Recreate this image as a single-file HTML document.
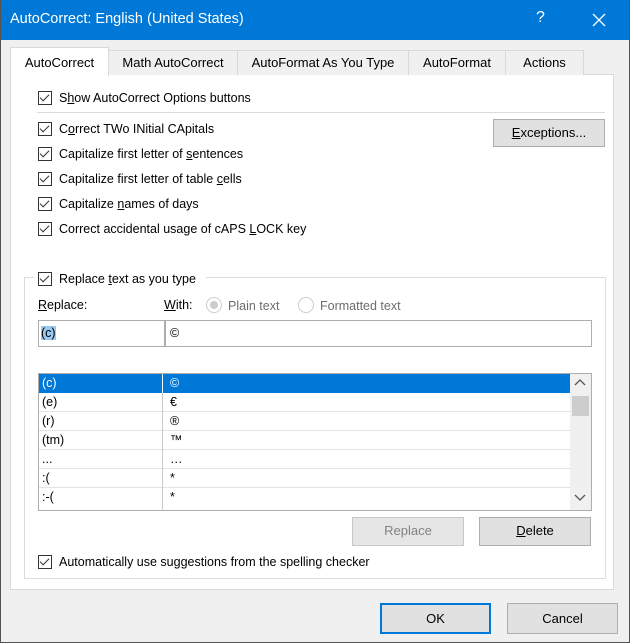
<!DOCTYPE html>
<html><head><meta charset="utf-8"><style>
*{box-sizing:border-box;margin:0;padding:0}
body{width:630px;height:643px;background:#f0f0f0;font-family:"Liberation Sans",sans-serif;font-size:12.5px;color:#000;position:relative;overflow:hidden}
.a{position:absolute;white-space:nowrap}
.title{left:0;top:0;width:630px;height:40px;background:#0078d7;color:#fff}
.tab{top:50px;height:25px;border:1px solid #d9d9d9;border-bottom:none;background:#f0f0f0;text-align:center;line-height:24px;font-size:13px}
.cb{width:14px;height:14px;border:1px solid #333;background:#fff}
.cb:after{content:"";position:absolute;left:3px;top:0px;width:4px;height:8px;border:solid #333;border-width:0 1.5px 1.5px 0;transform:rotate(45deg)}
.btn{border:1px solid #adadad;background:#e1e1e1;text-align:center;line-height:26px;font-size:13px}
.row{left:39px;width:531px;height:19px;border-bottom:1px solid #e3e3e3;line-height:18px}
.row span{position:absolute;left:3px}
.row b{font-weight:normal;position:absolute;left:131px}
.row i{position:absolute;left:123px;top:0;bottom:-1px;border-left:1px solid #c8c8c8}
u{text-decoration:underline}
</style></head><body>
<div class="a title"><span class="a" style="left:10px;top:11px;font-size:14.5px">AutoCorrect: English (United States)</span>
<span class="a" style="left:536px;top:9px;font-size:16px">?</span>
<svg class="a" style="left:592px;top:13px" width="14" height="14"><path d="M1 1L13 13M13 1L1 13" stroke="#fff" stroke-width="1.3"/></svg></div>
<div class="a" style="left:10px;top:74px;width:604px;height:516px;background:#fff;border:1px solid #d9d9d9"></div>
<div class="a tab" style="left:108px;width:130px">Math AutoCorrect</div>
<div class="a tab" style="left:237px;width:172px">AutoFormat As You Type</div>
<div class="a tab" style="left:408px;width:98px">AutoFormat</div>
<div class="a tab" style="left:505px;width:79px">Actions</div>
<div class="a tab" style="left:10px;top:47px;height:29px;width:99px;background:#fff;line-height:30px">AutoCorrect</div>

<div class="a cb" style="left:38px;top:91px"></div><div class="a" style="left:59px;top:91px">S<u>h</u>ow AutoCorrect Options buttons</div>
<div class="a" style="left:37px;top:112px;width:568px;height:1px;background:#dcdcdc"></div>
<div class="a cb" style="left:38px;top:122px"></div><div class="a" style="left:59px;top:122px">C<u>o</u>rrect TWo INitial CApitals</div>
<div class="a cb" style="left:38px;top:147px"></div><div class="a" style="left:59px;top:147px">Capitalize first letter of <u>s</u>entences</div>
<div class="a cb" style="left:38px;top:172px"></div><div class="a" style="left:59px;top:172px">Capitalize first letter of table <u>c</u>ells</div>
<div class="a cb" style="left:38px;top:197px"></div><div class="a" style="left:59px;top:197px">Capitalize <u>n</u>ames of days</div>
<div class="a cb" style="left:38px;top:222px"></div><div class="a" style="left:59px;top:222px">Correct accidental usage of cAPS <u>L</u>OCK key</div>
<div class="a btn" style="left:493px;top:119px;width:112px;height:28px"><u>E</u>xceptions...</div>

<div class="a" style="left:24px;top:277px;width:582px;height:302px;border:1px solid #dcdcdc"></div>
<div class="a" style="left:34px;top:271px;width:172px;height:14px;background:#fff"></div>
<div class="a cb" style="left:38px;top:272px"></div><div class="a" style="left:59px;top:272px">Replace <u>t</u>ext as you type</div>
<div class="a" style="left:38px;top:298px"><u>R</u>eplace:</div>
<div class="a" style="left:164px;top:298px"><u>W</u>ith:</div>
<div class="a" style="left:206px;top:297px;width:16px;height:16px;border-radius:50%;border:1px solid #ccc;background:#fff"><div class="a" style="left:3px;top:3px;width:8px;height:8px;border-radius:50%;background:#ccc"></div></div>
<div class="a" style="left:228px;top:299px;color:#6d6d6d">Plain text</div>
<div class="a" style="left:298px;top:297px;width:16px;height:16px;border-radius:50%;border:1px solid #ccc;background:#fff"></div>
<div class="a" style="left:320px;top:299px;color:#6d6d6d">Formatted text</div>
<div class="a" style="left:38px;top:320px;width:127px;height:27px;border:1px solid #adadad;background:#fff"><span class="a" style="left:2px;top:5px;background:#99c9ef">(c)</span></div>
<div class="a" style="left:164px;top:320px;width:428px;height:27px;border:1px solid #adadad;border-left:2px solid #adadad;background:#fff"><span class="a" style="left:4px;top:5px">©</span></div>

<div class="a" style="left:38px;top:373px;width:554px;height:138px;border:1px solid #adadad;background:#fff"></div>
<div class="a row" style="top:374px;background:#0078d7;color:#fff;border-bottom-color:#0078d7"><span>(c)</span><i style="border-color:#fff"></i><b>©</b></div>
<div class="a row" style="top:393px"><span>(e)</span><i></i><b>€</b></div>
<div class="a row" style="top:412px"><span>(r)</span><i></i><b>®</b></div>
<div class="a row" style="top:431px"><span>(tm)</span><i></i><b>™</b></div>
<div class="a row" style="top:450px"><span>...</span><i></i><b>…</b></div>
<div class="a row" style="top:469px"><span>:(</span><i></i><b>*</b></div>
<div class="a row" style="top:488px;height:22px;border:none"><span>:-(</span><i></i><b>*</b></div>
<div class="a" style="left:570px;top:374px;width:21px;height:136px;background:#f0f0f0"></div>
<div class="a" style="left:572px;top:396px;width:17px;height:20px;background:#cdcdcd"></div>
<svg class="a" style="left:574px;top:379px" width="12" height="8"><path d="M1 6L6 1L11 6" fill="none" stroke="#555" stroke-width="1.3"/></svg>
<svg class="a" style="left:574px;top:494px" width="12" height="8"><path d="M1 1L6 6L11 1" fill="none" stroke="#555" stroke-width="1.3"/></svg>

<div class="a btn" style="left:352px;top:517px;width:112px;height:29px;color:#838383;background:#e6e6e6;border-color:#c8c8c8">Replace</div>
<div class="a btn" style="left:479px;top:517px;width:112px;height:29px"><u>D</u>elete</div>
<div class="a cb" style="left:38px;top:555px"></div><div class="a" style="left:59px;top:555px">Automatically use su<u>g</u>gestions from the spelling checker</div>

<div class="a btn" style="left:380px;top:603px;width:111px;height:31px;border:2px solid #0078d7;line-height:27px">OK</div>
<div class="a btn" style="left:507px;top:603px;width:111px;height:31px;line-height:29px">Cancel</div>
<div class="a" style="left:0;top:0;width:630px;height:643px;border:1px solid #555;pointer-events:none;border-top:none"></div>
</body></html>
